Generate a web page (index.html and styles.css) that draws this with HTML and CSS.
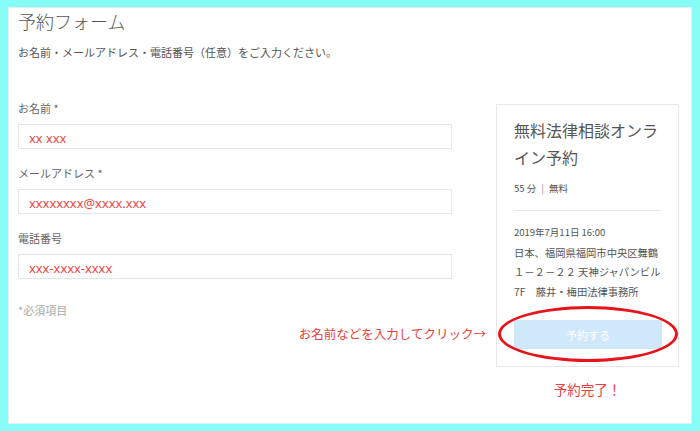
FILE: index.html
```html
<!DOCTYPE html>
<html lang="ja">

<head>
    <meta charset="UTF-8">
    <meta name="viewport" content="width=device-width, initial-scale=1.0">
    <title>予約フォーム</title>
    <link rel="stylesheet" href="styles.css">
</head>

<body>
    <div class="frame">
        <div class="page">
            <h1 class="title">予約フォーム</h1>
            <p class="lead">お名前・メールアドレス・電話番号（任意）をご入力ください。</p>

            <div class="row">
                <div class="form">
                    <div class="field">
                        <label for="name">お名前 *</label>
                        <input type="text" id="name" class="input" value="xx xxx">
                    </div>
                    <div class="field">
                        <label for="mail">メールアドレス *</label>
                        <input type="text" id="mail" class="input" value="xxxxxxxx@xxxx.xxx">
                    </div>
                    <div class="field">
                        <label for="tel">電話番号</label>
                        <input type="text" id="tel" class="input" value="xxx-xxxx-xxxx">
                    </div>
                    <p class="required">*必須項目</p>
                    <p class="note">お名前などを入力してクリック→</p>
                </div>

                <div class="side">
                    <div class="card">
                        <h2 class="card-title">無料法律相談オンライン予約</h2>
                        <p class="meta">55 分 <span class="sep">|</span> 無料</p>
                        <hr class="rule">
                        <p class="date">2019年7月11日 16:00</p>
                        <p class="address">日本、福岡県福岡市中央区舞鶴<br>１－２－２２ 天神ジャパンビル<br>7F　藤井・梅田法律事務所</p>
                        <button class="book">予約する</button>
                        <div class="circle"></div>
                    </div>
                    <p class="done">予約完了！</p>
                </div>
            </div>
        </div>
    </div>
</body>

</html>
```

FILE: styles.css
```css
html,
body {
    margin: 0;
    padding: 0;
}

body {
    font-family: "Noto Sans CJK JP", "Noto Sans", sans-serif;
    color: #555;
}

.frame {
    box-sizing: border-box;
    width: 700px;
    height: 431px;
    border-style: solid;
    border-color: #86fdf6;
    border-width: 7px 8px 7px 8px;
    background: #fff;
    box-shadow: inset 0 0 0 1px #e2eef3;
}

.page {
    padding: 0 0 0 10px;
}

.title {
    margin: 0;
    padding-top: 2px;
    font-size: 18px;
    line-height: 24px;
    font-weight: 300;
    color: #555;
}

.lead {
    margin: 11px 0 0;
    font-size: 11px;
    line-height: 16px;
    color: #555;
}

.row {
    display: flex;
    margin-top: 40px;
}

.form {
    width: 478px;
    display: flex;
    flex-direction: column;
}

.field {
    display: flex;
    flex-direction: column;
    gap: 8px;
    margin-bottom: 16px;
}

.field label {
    font-size: 11px;
    line-height: 16px;
    color: #666;
}

.input {
    box-sizing: border-box;
    width: 434px;
    height: 25px;
    margin: 0;
    padding: 2px 10px 0;
    border: 1px solid #e6e6e6;
    background: #fff;
    font-family: "Open Sans", "Noto Sans CJK JP", sans-serif;
    font-size: 13px;
    color: #f03a3a;
    outline: none;
}

.required {
    margin: 7px 0 0;
    font-size: 11px;
    line-height: 16px;
    color: #aaa;
}

.note {
    margin: 7px 0 0;
    padding-right: 10px;
    text-align: right;
    font-size: 12.5px;
    line-height: 18px;
    color: #e8413c;
}

.side {
    width: 183px;
    padding-top: 4px;
}

.card {
    position: relative;
    box-sizing: border-box;
    height: 263px;
    padding: 12px 17px 0 17px;
    border: 1px solid #e8e8e8;
}

.card-title {
    margin: 0;
    font-size: 16px;
    line-height: 27px;
    font-weight: 400;
    color: #555;
}

.meta {
    margin: 10px 0 0;
    font-size: 9.5px;
    line-height: 14px;
    color: #555;
}

.sep {
    margin: 0 3px;
    color: #888;
}

.rule {
    margin: 15px 0 0;
    border: 0;
    border-top: 1px solid #e6e6e6;
}

.date {
    margin: 12px 0 0;
    font-size: 9.5px;
    line-height: 19.5px;
}

.address {
    margin: 0;
    font-size: 10.3px;
    line-height: 19.5px;
    white-space: nowrap;
}

.book {
    display: block;
    width: 148px;
    height: 29px;
    margin-top: 19px;
    border: 0;
    background: #cfe9fa;
    color: #fff;
    font-family: inherit;
    font-size: 11px;
}

.circle {
    position: absolute;
    left: 1px;
    top: 201px;
    width: 174px;
    height: 50px;
    border: 3.5px solid #e8141c;
    border-radius: 50%;
}

.done {
    margin: 12px 0 0;
    text-align: center;
    font-size: 13.5px;
    line-height: 20px;
    color: #e8413c;
}
```
